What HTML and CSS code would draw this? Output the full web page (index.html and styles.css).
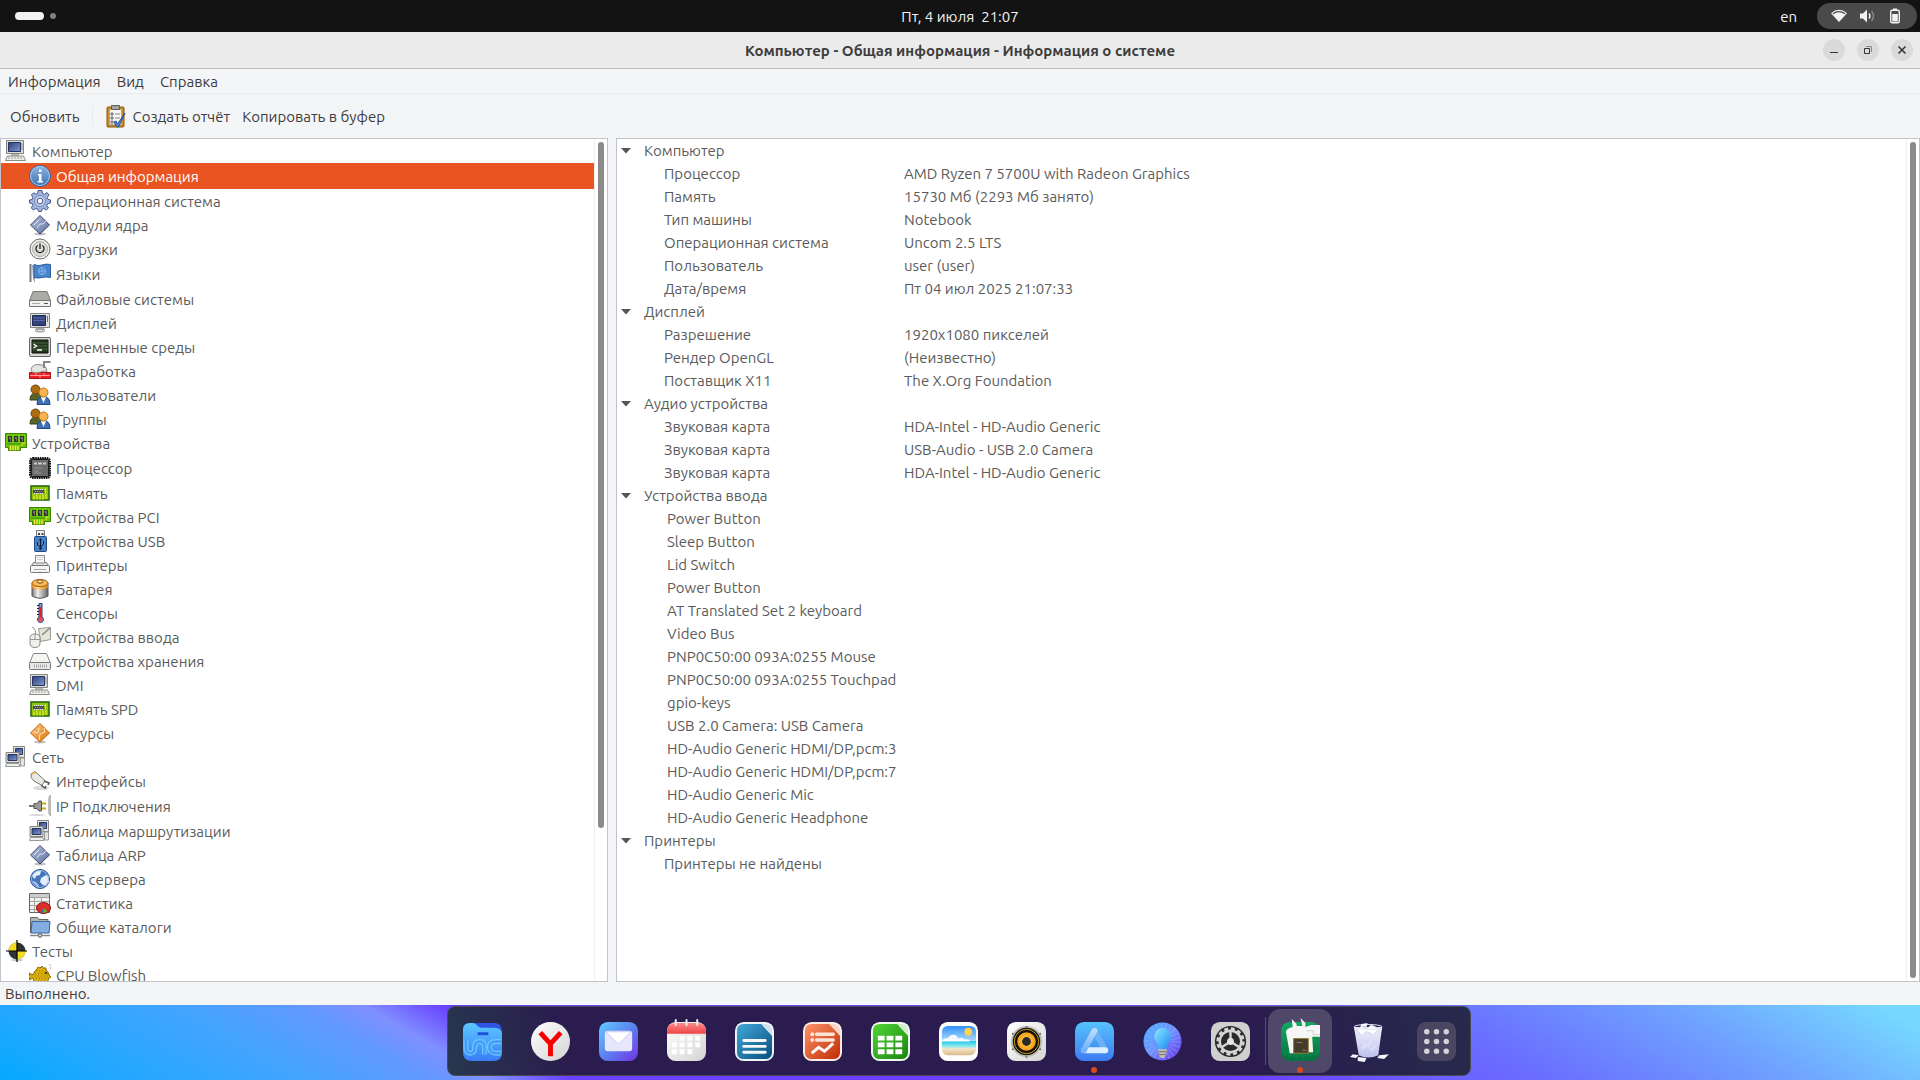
FILE: index.html
```html
<!DOCTYPE html>
<html lang="ru">
<head>
    <meta charset="UTF-8">
    <meta name="viewport" content="width=device-width, initial-scale=1.0">
    <title>Компьютер - Общая информация - Информация о системе</title>
    <link rel="stylesheet" href="styles.css">
</head>
<body>
    <svg class="sprite" aria-hidden="true">
        <defs>
            <linearGradient id="g-screen" x1="0" y1="0" x2="1" y2="1"><stop offset="0" stop-color="#2c3f80"/><stop offset="1" stop-color="#7f9bd0"/></linearGradient>
            <linearGradient id="g-info" x1="0" y1="0" x2="0" y2="1"><stop offset="0" stop-color="#8fb5e0"/><stop offset="1" stop-color="#3a72b8"/></linearGradient>
            <linearGradient id="g-gem" x1="0" y1="0" x2="1" y2="1"><stop offset="0" stop-color="#b9c4de"/><stop offset="1" stop-color="#5c6d9c"/></linearGradient>
            <linearGradient id="g-gold" x1="0" y1="0" x2="1" y2="1"><stop offset="0" stop-color="#fbc784"/><stop offset="1" stop-color="#dd7408"/></linearGradient>
            <linearGradient id="g-metal" x1="0" y1="0" x2="1" y2="0"><stop offset="0" stop-color="#777"/><stop offset=".35" stop-color="#eee"/><stop offset="1" stop-color="#666"/></linearGradient>
            <linearGradient id="g-amber" x1="0" y1="0" x2="1" y2="0"><stop offset="0" stop-color="#dd8a1a"/><stop offset=".35" stop-color="#ffd58c"/><stop offset="1" stop-color="#d07c10"/></linearGradient>
            <linearGradient id="g-folder" x1="0" y1="0" x2="0" y2="1"><stop offset="0" stop-color="#5cc8ff"/><stop offset="1" stop-color="#3a7cf6"/></linearGradient>
            <linearGradient id="g-white" x1="0" y1="0" x2="1" y2="1"><stop offset="0" stop-color="#fff"/><stop offset="1" stop-color="#d4d4d4"/></linearGradient>
            <linearGradient id="g-mail" x1="0" y1="0" x2="1" y2="1"><stop offset="0" stop-color="#63cdff"/><stop offset=".5" stop-color="#5b82f0"/><stop offset="1" stop-color="#7432e6"/></linearGradient>
            <linearGradient id="g-writer" x1="0" y1="0" x2="1" y2="1"><stop offset="0" stop-color="#40a8da"/><stop offset="1" stop-color="#0a4f7c"/></linearGradient>
            <linearGradient id="g-impress" x1="0" y1="0" x2="1" y2="1"><stop offset="0" stop-color="#ff9468"/><stop offset="1" stop-color="#bf2c04"/></linearGradient>
            <linearGradient id="g-calc" x1="0" y1="0" x2="1" y2="1"><stop offset="0" stop-color="#50d636"/><stop offset="1" stop-color="#1c8410"/></linearGradient>
            <linearGradient id="g-red" x1="0" y1="0" x2="0" y2="1"><stop offset="0" stop-color="#ff8a8a"/><stop offset="1" stop-color="#ee4444"/></linearGradient>
            <linearGradient id="g-sky" x1="0" y1="0" x2="0" y2="1"><stop offset="0" stop-color="#2f90fa"/><stop offset=".5" stop-color="#a8dcfc"/><stop offset=".52" stop-color="#1ec6e8"/><stop offset=".72" stop-color="#a0ecee"/><stop offset=".78" stop-color="#f4e4c8"/><stop offset="1" stop-color="#d9b98a"/></linearGradient>
            <linearGradient id="g-store" x1="0" y1="0" x2="0" y2="1"><stop offset="0" stop-color="#56c2fc"/><stop offset="1" stop-color="#3b7cf2"/></linearGradient>
            <linearGradient id="g-bar" x1="0" y1="0" x2="0" y2="1"><stop offset="0" stop-color="#b9dcff"/><stop offset="1" stop-color="#6fb0fa"/></linearGradient>
            <linearGradient id="g-hints" x1="0" y1="0" x2="1" y2="1"><stop offset="0" stop-color="#48b0ff"/><stop offset=".5" stop-color="#6f92ff"/><stop offset="1" stop-color="#6a2ae8"/></linearGradient>
            <linearGradient id="g-bulb" x1="0" y1="0" x2="1" y2="1"><stop offset="0" stop-color="#8fe8ff"/><stop offset="1" stop-color="#168cf0"/></linearGradient>
            <linearGradient id="g-green" x1="0" y1="0" x2="0" y2="1"><stop offset="0" stop-color="#14a862"/><stop offset="1" stop-color="#087040"/></linearGradient>
            <linearGradient id="g-bin" x1="0" y1="0" x2="0" y2="1"><stop offset="0" stop-color="#eef0fa"/><stop offset="1" stop-color="#bfc2f0"/></linearGradient>
            <radialGradient id="g-cone"><stop offset="0" stop-color="#ffe060"/><stop offset="1" stop-color="#f59a10"/></radialGradient>
        </defs>

        <!-- tree icons, 22x22 -->
        <symbol id="i-computer" viewBox="0 0 22 22">
            <path d="M1.500.5h17v13h-17z" fill="#deded9" stroke="#84857f"/>
            <path d="M3.500 2.500h12v9h-12z" fill="url(#g-screen)" stroke="#26345f"/>
            <path d="M17 3v7" stroke="#999"/>
            <path d="M6 14h8v2H6z" fill="#b8b8b2"/>
            <path d="M2.500 16h16l2 4.500H.5z" fill="#eeeeea" stroke="#8c8d88"/>
            <path d="M3 18h14" stroke="#9d9e99" stroke-dasharray="2 1"/>
        </symbol>
        <symbol id="i-info" viewBox="0 0 22 22">
            <circle cx="11" cy="11" r="10.500" fill="url(#g-info)" stroke="#3465a4"/>
            <circle cx="11" cy="11" r="9.500" fill="none" stroke="#a9c6e8"/>
            <path d="M10 4.500h2.500v2.500H10zM9 9h3.500v7H14v1.500H8.500V16H10v-5.500H9z" fill="#fff"/>
        </symbol>
        <symbol id="i-gear" viewBox="0 0 22 22">
            <path d="M9 .5h4l.5 3 2 .8L18 2.500l2 2.500-1.800 2.500.6 1.800 2.700.7v3l-2.800.6-.9 1.900 1.700 2.400-2.300 2.200-2.500-1.700-1.800.8-.4 2.300h-3l-.7-2.300-1.900-.8-2.500 1.600-2.200-2.200 1.700-2.500-.8-1.800L.5 13v-3l2.700-.6.7-2L2.400 5l2.200-2.200L7 4.200l1.700-.7z" fill="#a3b3da" stroke="#46598f"/>
            <circle cx="11" cy="11" r="5.500" fill="#c4d0ea" stroke="#7587b8"/>
            <circle cx="11" cy="11" r="2.800" fill="#fff" stroke="#46598f"/>
        </symbol>
        <symbol id="i-gem" viewBox="0 0 22 22">
            <ellipse cx="11" cy="20" rx="6" ry="1.500" fill="#000" opacity=".25"/>
            <path d="M11 1.500 20.500 11 11 20 1.500 11z" fill="url(#g-gem)" stroke="#34446f"/>
            <path d="M5 11l5-5M8 14l3-4h3l3-3" stroke="#dfe5f2" fill="none"/>
        </symbol>
        <symbol id="i-gem-orange" viewBox="0 0 22 22">
            <ellipse cx="11" cy="20" rx="6" ry="1.500" fill="#000" opacity=".25"/>
            <path d="M11 1.500 20.500 11 11 20 1.500 11z" fill="url(#g-gold)" stroke="#c4620c"/>
            <path d="M4 10l5 1 1-5M10 18l1-6 5-2-1-4" stroke="#ffe3bd" fill="none"/>
        </symbol>
        <symbol id="i-power" viewBox="0 0 22 22">
            <circle cx="11" cy="11" r="10" fill="#f2f2f0" stroke="#6d6e6a"/>
            <circle cx="11" cy="11" r="7.500" fill="#dcdcd8" stroke="#aaa"/>
            <path d="M8.500 7.500a4 4 0 1 0 5 0M11 5.500V11" fill="none" stroke="#222" stroke-width="1.300"/>
        </symbol>
        <symbol id="i-flag" viewBox="0 0 22 22">
            <path d="M1.500 1v18" stroke="#777a78" stroke-width="2"/>
            <path d="M3 2l3 1v17l-2-4z" fill="#9aa7b0"/>
            <path d="M5 1.500q4 2 8 .5t8.500-.5v13q-5-1-8.500 0t-8 0z" fill="#4786cf" stroke="#2c5e9e"/>
            <circle cx="13" cy="8" r="3.500" fill="none" stroke="#86b4ea"/>
            <path d="M10 8h6M13 5v6" stroke="#86b4ea"/>
        </symbol>
        <symbol id="i-drive" viewBox="0 0 22 22">
            <path d="M4 3.500h14l3.500 9H.5z" fill="#aaaaa6" stroke="#777"/>
            <path d="M.5 12.500h21v6H.5z" fill="#f0f0ee" stroke="#777"/>
            <path d="M3 15.500h8" stroke="#aaa"/><path d="M15 15.500h4" stroke="#555"/>
        </symbol>
        <symbol id="i-display" viewBox="0 0 22 22">
            <path d="M1.500 1.500h19v14h-19z" fill="#e0e0dc" stroke="#84857f"/>
            <path d="M3.500 3.500h13v10h-13z" fill="#34427c" stroke="#1e2a55"/>
            <path d="M4 6h12M4 8.500h12" stroke="#5668a5"/>
            <path d="M18.500 4v6" stroke="#777"/>
            <path d="M7 16h8l1 2H6z" fill="#aaa"/><ellipse cx="11" cy="18.500" rx="5" ry="1.500" fill="#d8d8d4" stroke="#999"/>
        </symbol>
        <symbol id="i-terminal" viewBox="0 0 22 22">
            <rect x=".5" y="1.500" width="21" height="19" rx="1.500" fill="#d8d8d4" stroke="#666"/>
            <path d="M3 4h16v13H3z" fill="#26371f" stroke="#111"/>
            <path d="M3 7h16M3 10h16M3 13h16" stroke="#46603a"/>
            <path d="M4.500 8l3 2-3 2M8 14h5" fill="none" stroke="#fff" stroke-width="1.300"/>
        </symbol>
        <symbol id="i-trowel" viewBox="0 0 22 22">
            <path d="M.5 12.500h21v6H.5z" fill="#ee2024" stroke="#a80f12"/>
            <path d="M1 15.500h20M7 13v2M15 13v2M11 16v2" stroke="#ff9c9c"/>
            <path d="M2 9.500q1-5 7-5 6 0 8 3l1 4q-3-1-5 0t-4 1q-7 1-7-3z" fill="#e4e4e0" stroke="#888"/>
            <path d="M15 8V2h6.500" fill="none" stroke="#888" stroke-width="2"/>
        </symbol>
        <symbol id="i-users" viewBox="0 0 22 22">
            <path d="M1 16q0-7 6-7t6 7z" fill="#56662a" stroke="#333e14"/>
            <circle cx="6.500" cy="5.500" r="4.500" fill="#b06a10" stroke="#744205"/>
            <path d="M8 20.500q0-8 6.500-8t6.500 8z" fill="#3f70b5" stroke="#204a87"/>
            <path d="M12 13l2.500 6 2.500-6z" fill="#fff"/>
            <circle cx="14.500" cy="8.500" r="4.500" fill="#f7b552" stroke="#c27410"/>
        </symbol>
        <symbol id="i-card" viewBox="0 0 22 22">
            <path d="M.5 1.500h21v14h-6v3h-12v-3h-3z" fill="#6cc60c" stroke="#3c8400"/>
            <path d="M3 4h4v6H3zM9 4h4v6H9zM15 4h4v6h-4z" fill="#333"/>
            <path d="M4 6h2M10 6h2M16 6h2M5 8h1M11 8h1M17 8h1" stroke="#bbb"/>
            <path d="M5.500 13.500v5M8 13.500v5M10.500 13.500v5M13 13.500v5" stroke="#f7e640" stroke-width="1.300"/>
            <path d="M2 12h14" stroke="#3a8800"/><path d="M17 14v-3h3" fill="none" stroke="#f0e020"/>
        </symbol>
        <symbol id="i-cpu" viewBox="0 0 22 22">
            <rect x="1" y="1" width="20" height="20" rx="3" fill="#777" stroke="#111" stroke-width="2" stroke-dasharray="1.500 .8"/>
            <rect x="2.500" y="2.500" width="17" height="17" rx="1" fill="#6b6b6b" stroke="#1c1c1c"/>
            <path d="M5 6.500h3M9 6.500h4M14 6.500h3" stroke="#ccc" stroke-width="2"/>
            <path d="M5 11h8M5 14h5M5 16h7" stroke="#999"/>
        </symbol>
        <symbol id="i-memory" viewBox="0 0 22 22">
            <path d="M2 4h18v14H2z" fill="#8fc40c" stroke="#21620c" stroke-width="1.500"/>
            <path d="M5 7.500h9M5 11.500h9" stroke="#eee" stroke-dasharray="1 1"/>
            <path d="M4 8h11v3H4z" fill="#4a4a4a"/><path d="M6 9.500h7" stroke="#999" stroke-dasharray="1 1"/>
            <path d="M16.500 6v5" stroke="#e8e020"/>
            <path d="M5 13.500V18M8 12.500V18M11 13.500V18M14 12.500V18M17 12v5" stroke="#fbf030"/>
        </symbol>
        <symbol id="i-usb" viewBox="0 0 22 22">
            <path d="M7.500.5h8v6h-8z" fill="#eee" stroke="#777"/><path d="M9 3h2v2H9zM12.500 3h2v2h-2z" fill="#444"/>
            <rect x="5.500" y="6.500" width="12" height="15" rx="1" fill="#4a80c4" stroke="#204a87"/>
            <path d="M11.500 9v10M8.500 12v3l3 2 3-3v-3" fill="none" stroke="#0c1c38"/>
            <path d="M10 10.500l1.500-2.500 1.500 2.500z" fill="#0c1c38"/><circle cx="11.500" cy="18.500" r="1.300" fill="#0c1c38"/>
        </symbol>
        <symbol id="i-printer" viewBox="0 0 22 22">
            <path d="M4.500 8.500h13l3 4.500h-19z" fill="#dededa" stroke="#777"/>
            <path d="M6.500 9V1.500h9V9z" fill="#fafafa" stroke="#888"/><path d="M8 3.500h6M8 5.500h6" stroke="#ccc"/>
            <rect x="1.500" y="11.500" width="19" height="7" rx="1" fill="#f4f4f2" stroke="#777"/><path d="M5 15.500h12" stroke="#aaa"/>
        </symbol>
        <symbol id="i-battery" viewBox="0 0 22 22">
            <path d="M3 5v13q8 4.500 16 0V5z" fill="url(#g-metal)" stroke="#555"/>
            <path d="M3 5v5q8 4 16 0V5z" fill="url(#g-amber)"/>
            <ellipse cx="11" cy="5" rx="8" ry="3.500" fill="#f8bc5c" stroke="#a3600b"/>
            <ellipse cx="11" cy="3.500" rx="3" ry="1.700" fill="#ffd894" stroke="#7a4a0c"/>
        </symbol>
        <symbol id="i-thermo" viewBox="0 0 22 22">
            <path d="M10 1.500h3V15a3 3 0 1 1-3 0z" fill="#7d9fd4" stroke="#223e78"/>
            <path d="M11.500 5v11" stroke="#e01c24" stroke-width="2"/><circle cx="11.500" cy="17.500" r="2.300" fill="#f0484c"/>
            <path d="M8 3.500h2M8 6.500h2M8 9.500h2M8 12.500h2" stroke="#222"/>
        </symbol>
        <symbol id="i-input" viewBox="0 0 22 22">
            <path d="M9.500 2.500l12-1v12l-10 2z" fill="#e4e4da" stroke="#999a90"/>
            <path d="M13 9l8-7" stroke="#888" stroke-width="1.500"/>
            <path d="M6 9Q8 4 3 1" fill="none" stroke="#888"/>
            <path d="M1 12q0-4 5-4t5 4v5q0 4.500-5 4.500T1 17z" fill="#efefed" stroke="#8b8c86"/>
            <path d="M1 13.500h10M6 8.500v5" stroke="#999"/>
        </symbol>
        <symbol id="i-hdd" viewBox="0 0 22 22">
            <path d="M4.500 3.500h13l4 9.500H.5z" fill="#f4f4f2" stroke="#888"/>
            <rect x=".5" y="12.500" width="21" height="7" rx="1" fill="#e8e8e4" stroke="#777"/><path d="M5 16h13" stroke="#aaa" stroke-width="3" stroke-dasharray="1 1"/>
        </symbol>
        <symbol id="i-network" viewBox="0 0 22 22">
            <path d="M8.500.5h11v11h-11z" fill="#e2e2de" stroke="#84857f"/>
            <path d="M10.500 2.500h7v6h-7z" fill="url(#g-screen)" stroke="#26345f"/>
            <path d="M15.500 12h4v8h-4z" fill="#e4e4e0" stroke="#999"/>
            <path d="M1 6.500h13v10H1z" fill="#e2e2de" stroke="#84857f"/>
            <path d="M3 8.500h9v6H3z" fill="url(#g-screen)" stroke="#26345f"/>
            <path d="M1.500 17.500h12.500l1 3H.5z" fill="#eeeeea" stroke="#999"/>
        </symbol>
        <symbol id="i-plug" viewBox="0 0 22 22">
            <ellipse cx="12" cy="18" rx="8" ry="2" fill="#000" opacity=".15"/>
            <path d="M2 4l4-2.500 10 9-3 5-8-4.500q-4-3-3-7z" fill="#e8e8e4" stroke="#7b7c76"/>
            <path d="M3 4l3-1.500" stroke="#f0b040" stroke-width="1.500"/>
            <path d="M15 11l5 2-1 2M12 15l4 3 1-2" fill="none" stroke="#555" stroke-width="1.500"/>
        </symbol>
        <symbol id="i-ip" viewBox="0 0 22 22">
            <ellipse cx="8" cy="20" rx="8" ry="1" fill="#000" opacity=".15"/>
            <path d="M0 11h6" stroke="#777" stroke-width="2"/>
            <path d="M5 8.500h3l2-2.500h2.500v10H10l-2-2.500H5z" fill="#999a94" stroke="#555"/>
            <path d="M13 8.500h4M13 13.500h4" stroke="#c8ac08" stroke-width="2"/>
            <path d="M22 .5q-2 0-2 3v14q0 3 2 3z" fill="#f0f0ee" stroke="#888"/>
        </symbol>
        <symbol id="i-globe" viewBox="0 0 22 22">
            <circle cx="11" cy="11" r="9.500" fill="#4374bc" stroke="#24509a"/>
            <path d="M3 8q3-6 9-5l-1 4-4 1-1 3zM12 10l5-3 3 2v5l-3 4-3-1-3-3z" fill="#e6eef9"/>
            <path d="M4 14q4 1 5 5" stroke="#a9c5ea" stroke-width="2" fill="none"/>
            <circle cx="11" cy="11" r="8.500" fill="none" stroke="#9dbce4"/>
        </symbol>
        <symbol id="i-stats" viewBox="0 0 22 22">
            <path d="M.5 1.500h20v19H.5z" fill="#f2f2f0" stroke="#666"/>
            <path d="M1 5.500h19M1 9.500h19M1 13.500h8M1 17.500h6M5.500 2v18M12.500 2v8" stroke="#a5a5a0"/>
            <path d="M1 3.500h19" stroke="#ccc" stroke-width="3"/>
            <ellipse cx="14.500" cy="16" rx="7" ry="5.500" fill="#dd2e2e" stroke="#8f0d0d"/>
            <path d="M14.500 15.500l-3 5.500h3z" fill="#3b6bc0"/><path d="M14.500 15.500V21l4-1z" fill="#5ab820"/>
        </symbol>
        <symbol id="i-share" viewBox="0 0 22 22">
            <path d="M1.500 17V1.500h7l1.500 2h9V8" fill="#b4b6b2" stroke="#666"/>
            <path d="M3 5.500h18l-1 11.500H2z" fill="#84ace0" stroke="#3465a4"/>
            <path d="M1 19.500h20" stroke="#888" stroke-width="1.500"/><circle cx="11" cy="19.500" r="1.800" fill="#ddd" stroke="#555"/>
        </symbol>
        <symbol id="i-test" viewBox="0 0 22 22">
            <ellipse cx="12" cy="20" rx="6" ry="1.500" fill="#000" opacity=".2"/>
            <circle cx="12" cy="11" r="8.500" fill="#2e3436"/>
            <path d="M12 11V2.500A8.500 8.500 0 0 0 3.500 11zM12 11v8.500a8.500 8.500 0 0 0 8.500-8.500z" fill="#f5dc20"/>
            <path d="M12 0v22M1 11h21" stroke="#000" stroke-width="1.200"/>
        </symbol>
        <symbol id="i-fish" viewBox="0 0 22 22">
            <path d="M0 9l4 2q1-4 4-6l1-2 2 1 2-2 1 2 3 0 0 2q3 2 3.500 6l1.500 1-2 1q-2 7-8 7-7 0-8-7l-4 2 1-3.500z" fill="#dcae0c" stroke="#8a6c08"/>
            <path d="M7 7h10M6 9.500h13M6 12h13M7 14.500h11M9 17h7" stroke="#96760a" stroke-dasharray="1 2"/>
            <circle cx="17" cy="9" r="1" fill="#222"/><path d="M20.500 1h1M21 4h1" stroke="#666"/>
        </symbol>
        <symbol id="i-report" viewBox="0 0 22 24">
            <rect x="2" y="3" width="17" height="20" rx="1" fill="#c98a2c" stroke="#8f5902"/>
            <path d="M4.500 5.500h12v15h-12z" fill="#f6f6f4" stroke="#aaa"/>
            <path d="M6.500 1.500h8v4h-8z" fill="#a5a6a2" stroke="#60615d"/>
            <path d="M6 9h2v2H6zM6 13h2v2H6zM6 17h2v2H6z" fill="none" stroke="#666"/>
            <path d="M10 10h5M10 14h5" stroke="#888"/>
            <path d="M9 18l2-1 1.500 3L20 9l-6.500 14h-1.500z" fill="#5a8ccc" stroke="#24509a"/>
        </symbol>
        <symbol id="i-arrow" viewBox="0 0 10 6"><path d="M0 0h10L5 5.500z" fill="#555"/></symbol>
    </svg>

    <header class="topbar">
        <button class="workspaces" aria-label="Рабочие столы"><span class="pill"></span><span class="dot"></span></button>
        <button class="clock">Пт, 4 июля&nbsp; 21:07</button>
        <div class="tray">
            <button class="lang">en</button>
            <button class="quick" aria-label="Системное меню">
                <svg width="16" height="16" viewBox="0 0 16 16"><path d="M0 5.200Q8-1.500 16 5.200L8 14z" fill="#f2f2f2"/><path d="M2 5.800Q8 1.500 14 5.800" fill="none" stroke="#4a4a4a" stroke-width="1.300"/></svg>
                <svg width="16" height="16" viewBox="0 0 16 16"><path d="M1 5.500h3L8 1.500v13l-4-4H1z" fill="#f2f2f2"/><path d="M10 5.500q2 2.500 0 5" fill="none" stroke="#f2f2f2" stroke-width="1.400"/><path d="M12.500 3q4 5 0 10" fill="none" stroke="#8a8a8a" stroke-width="1.400"/></svg>
                <svg width="16" height="16" viewBox="0 0 16 16"><path d="M6 .5h4v2H6z" fill="#f2f2f2"/><rect x="3.700" y="2.200" width="8.600" height="12.600" rx="1.500" fill="none" stroke="#f2f2f2" stroke-width="1.400"/><path d="M5.200 6h5.600v7.500H5.200z" fill="#f2f2f2"/></svg>
            </button>
        </div>
    </header>

    <main class="window">
        <div class="titlebar">
            <h1>Компьютер - Общая информация - Информация о системе</h1>
            <div class="controls">
                <button aria-label="Свернуть"><svg width="10" height="10"><path d="M1 7.500h8" stroke="#333"/></svg></button>
                <button aria-label="Восстановить"><svg width="10" height="10"><path d="M1.500 3.500h5v5h-5z" fill="none" stroke="#333"/><path d="M3 1.500h5.500V7" fill="none" stroke="#888"/></svg></button>
                <button aria-label="Закрыть"><svg width="10" height="10"><path d="M1.500 1.500l7 7M8.500 1.500l-7 7" stroke="#333" stroke-width="1.500"/></svg></button>
            </div>
        </div>
        <nav class="menubar">
            <button>Информация</button>
            <button>Вид</button>
            <button>Справка</button>
        </nav>
        <div class="toolbar">
            <button>Обновить</button>
            <span class="divider"></span>
            <button><svg width="22" height="24"><use href="#i-report"/></svg>Создать отчёт</button>
            <button>Копировать в буфер</button>
        </div>

        <div class="panes">
            <div class="pane tree-pane">
                <ul class="tree">
                    <li><button><svg><use href="#i-computer"/></svg>Компьютер</button>
                        <ul>
                            <li><button class="selected"><svg><use href="#i-info"/></svg>Общая информация</button></li>
                            <li><button><svg><use href="#i-gear"/></svg>Операционная система</button></li>
                            <li><button><svg><use href="#i-gem"/></svg>Модули ядра</button></li>
                            <li><button><svg><use href="#i-power"/></svg>Загрузки</button></li>
                            <li><button class="tall"><svg><use href="#i-flag"/></svg>Языки</button></li>
                            <li><button><svg><use href="#i-drive"/></svg>Файловые системы</button></li>
                            <li><button><svg><use href="#i-display"/></svg>Дисплей</button></li>
                            <li><button><svg><use href="#i-terminal"/></svg>Переменные среды</button></li>
                            <li><button><svg><use href="#i-trowel"/></svg>Разработка</button></li>
                            <li><button><svg><use href="#i-users"/></svg>Пользователи</button></li>
                            <li><button><svg><use href="#i-users"/></svg>Группы</button></li>
                        </ul>
                    </li>
                    <li><button><svg><use href="#i-card"/></svg>Устройства</button>
                        <ul>
                            <li><button class="tall"><svg><use href="#i-cpu"/></svg>Процессор</button></li>
                            <li><button><svg><use href="#i-memory"/></svg>Память</button></li>
                            <li><button><svg><use href="#i-card"/></svg>Устройства PCI</button></li>
                            <li><button><svg><use href="#i-usb"/></svg>Устройства USB</button></li>
                            <li><button><svg><use href="#i-printer"/></svg>Принтеры</button></li>
                            <li><button><svg><use href="#i-battery"/></svg>Батарея</button></li>
                            <li><button><svg><use href="#i-thermo"/></svg>Сенсоры</button></li>
                            <li><button><svg><use href="#i-input"/></svg>Устройства ввода</button></li>
                            <li><button><svg><use href="#i-hdd"/></svg>Устройства хранения</button></li>
                            <li><button><svg><use href="#i-computer"/></svg>DMI</button></li>
                            <li><button><svg><use href="#i-memory"/></svg>Память SPD</button></li>
                            <li><button><svg><use href="#i-gem-orange"/></svg>Ресурсы</button></li>
                        </ul>
                    </li>
                    <li><button><svg><use href="#i-network"/></svg>Сеть</button>
                        <ul>
                            <li><button><svg><use href="#i-plug"/></svg>Интерфейсы</button></li>
                            <li><button class="tall"><svg><use href="#i-ip"/></svg>IP Подключения</button></li>
                            <li><button><svg><use href="#i-network"/></svg>Таблица маршрутизации</button></li>
                            <li><button><svg><use href="#i-gem"/></svg>Таблица ARP</button></li>
                            <li><button><svg><use href="#i-globe"/></svg>DNS сервера</button></li>
                            <li><button><svg><use href="#i-stats"/></svg>Статистика</button></li>
                            <li><button><svg><use href="#i-share"/></svg>Общие каталоги</button></li>
                        </ul>
                    </li>
                    <li><button><svg><use href="#i-test"/></svg>Тесты</button>
                        <ul>
                            <li><button><svg><use href="#i-fish"/></svg>CPU Blowfish</button></li>
                        </ul>
                    </li>
                </ul>
                <div class="scrollbar"><span class="thumb thumb-tree"></span></div>
            </div>

            <div class="pane info-pane">
                <div class="info-scroll">
                    <table class="info">
                        <colgroup><col class="col-name"><col></colgroup>
                        <tbody>
                            <tr><th colspan="2"><button><svg><use href="#i-arrow"/></svg>Компьютер</button></th></tr>
                            <tr><td>Процессор</td><td>AMD Ryzen 7 5700U with Radeon Graphics</td></tr>
                            <tr><td>Память</td><td>15730 Мб (2293 Мб занято)</td></tr>
                            <tr><td>Тип машины</td><td>Notebook</td></tr>
                            <tr><td>Операционная система</td><td>Uncom 2.5 LTS</td></tr>
                            <tr><td>Пользователь</td><td>user (user)</td></tr>
                            <tr><td>Дата/время</td><td>Пт 04 июл 2025 21:07:33</td></tr>
                        </tbody>
                        <tbody>
                            <tr><th colspan="2"><button><svg><use href="#i-arrow"/></svg>Дисплей</button></th></tr>
                            <tr><td>Разрешение</td><td>1920x1080 пикселей</td></tr>
                            <tr><td>Рендер OpenGL</td><td>(Неизвестно)</td></tr>
                            <tr><td>Поставщик X11</td><td>The X.Org Foundation</td></tr>
                        </tbody>
                        <tbody>
                            <tr><th colspan="2"><button><svg><use href="#i-arrow"/></svg>Аудио устройства</button></th></tr>
                            <tr><td>Звуковая карта</td><td>HDA-Intel - HD-Audio Generic</td></tr>
                            <tr><td>Звуковая карта</td><td>USB-Audio - USB 2.0 Camera</td></tr>
                            <tr><td>Звуковая карта</td><td>HDA-Intel - HD-Audio Generic</td></tr>
                        </tbody>
                        <tbody class="inputs">
                            <tr><th colspan="2"><button><svg><use href="#i-arrow"/></svg>Устройства ввода</button></th></tr>
                            <tr><td>Power Button</td><td></td></tr>
                            <tr><td>Sleep Button</td><td></td></tr>
                            <tr><td>Lid Switch</td><td></td></tr>
                            <tr><td>Power Button</td><td></td></tr>
                            <tr><td>AT Translated Set 2 keyboard</td><td></td></tr>
                            <tr><td>Video Bus</td><td></td></tr>
                            <tr><td>PNP0C50:00 093A:0255 Mouse</td><td></td></tr>
                            <tr><td>PNP0C50:00 093A:0255 Touchpad</td><td></td></tr>
                            <tr><td>gpio-keys</td><td></td></tr>
                            <tr><td>USB 2.0 Camera: USB Camera</td><td></td></tr>
                            <tr><td>HD-Audio Generic HDMI/DP,pcm:3</td><td></td></tr>
                            <tr><td>HD-Audio Generic HDMI/DP,pcm:7</td><td></td></tr>
                            <tr><td>HD-Audio Generic Mic</td><td></td></tr>
                            <tr><td>HD-Audio Generic Headphone</td><td></td></tr>
                        </tbody>
                        <tbody>
                            <tr><th colspan="2"><button><svg><use href="#i-arrow"/></svg>Принтеры</button></th></tr>
                            <tr><td>Принтеры не найдены</td><td></td></tr>
                        </tbody>
                    </table>
                </div>
                <div class="scrollbar"><span class="thumb"></span></div>
            </div>
        </div>
        <div class="statusbar">Выполнено.</div>
    </main>

    <footer class="desktop">
        <nav class="dock">
            <button aria-label="Файлы"><svg viewBox="0 0 40 40"><path d="M8 1h24q8 0 8 8v14H0V9q0-8 8-8z" fill="#2f54e4"/><path d="M0 8q0-7 7-7h3q3 0 5 3 2 2 5 2h12q8 0 8 7v18q0 9-9 9H9q-9 0-9-9z" fill="url(#g-folder)"/><path d="M15 12h11" stroke="#1f52d8" stroke-width="3"/><path d="M3 18v9q0 5 4.500 5t4.500-5v-2q0-5 5-5t5 5v8M39 20h-5q-7 0-7 6t7 6h5" fill="none" stroke="#6cc6ff" stroke-width="5"/><path d="M3 17v10q0 5 4.500 5t4.500-5v-2q0-5 5-5t5 5v9M40 20h-6q-7 0-7 6t7 6h6" fill="none" stroke="#459cf8" stroke-width="2.500"/></svg></button>
            <button aria-label="Яндекс Браузер"><svg viewBox="0 0 40 40"><circle cx="20" cy="20" r="20" fill="url(#g-white)"/><path d="M9.500 11 20 22.500 30.500 11M20 21v14" fill="none" stroke="#f60000" stroke-width="5"/></svg></button>
            <button aria-label="Почта"><svg viewBox="0 0 40 40"><rect width="40" height="40" rx="9" fill="url(#g-mail)"/><rect x="6" y="9" width="28" height="21" rx="3" fill="#e7e6fd"/><path d="M7 10l11 11q2 2 4 0l11-11z" fill="#fff" stroke="#c9caf2"/></svg></button>
            <button aria-label="Календарь"><svg viewBox="0 0 40 40"><rect width="40" height="40" rx="9" fill="url(#g-white)"/><path d="M0 12V9q0-8 9-8h22q9 0 9 8v3z" fill="url(#g-red)"/><path d="M9-2v5M20-2v5M31-2v5" stroke="#eee" stroke-width="2" stroke-linecap="round"/><g fill="#fff"><path d="M13 14h5v5h-5zM21 14h5v5h-5zM29 14h5v5h-5zM5 21h5v5H5zM13 21h5v5h-5zM21 21h5v5h-5zM29 21h5v5h-5zM5 28h5v5H5zM13 28h5v5h-5zM21 28h5v5h-5z"/></g></svg></button>
            <button aria-label="Writer"><svg viewBox="0 0 40 40"><rect width="40" height="40" rx="9" fill="#f0f5f8"/><path d="M9 2h18l11 12v17q0 7-7 7H9q-7 0-7-7V9q0-7 7-7z" fill="url(#g-writer)"/><path d="M27 2l11 12V9q0-7-7-7z" fill="#cfe2ee"/><path d="M9 19h22M9 25h22M9 31h22" stroke="#f4f8fb" stroke-width="3" stroke-linecap="round"/></svg></button>
            <button aria-label="Impress"><svg viewBox="0 0 40 40"><rect width="40" height="40" rx="9" fill="#fbeee8"/><path d="M9 2h18l11 12v17q0 7-7 7H9q-7 0-7-7V9q0-7 7-7z" fill="url(#g-impress)"/><path d="M27 2l11 12V9q0-7-7-7z" fill="#f8d6c8"/><path d="M14 12.500h17M14 18.500h17" stroke="#fbe4da" stroke-width="3.500" stroke-linecap="round"/><circle cx="9.500" cy="12.500" r="2" fill="#fbe4da"/><circle cx="9.500" cy="18.500" r="2" fill="#fbe4da"/><path d="M9 32l7-6 6 4 9-8" fill="none" stroke="#fff" stroke-width="3"/></svg></button>
            <button aria-label="Calc"><svg viewBox="0 0 40 40"><rect width="40" height="40" rx="9" fill="#f0faee"/><path d="M9 2h18l11 12v17q0 7-7 7H9q-7 0-7-7V9q0-7 7-7z" fill="url(#g-calc)"/><path d="M27 2l11 12V9q0-7-7-7z" fill="#d2f0cc"/><path d="M7 14h7v5H7zM16 14h7v5h-7zM25 14h7v5h-7zM7 21h7v5H7zM16 21h7v5h-7zM25 21h7v5h-7zM7 28h7v5H7zM16 28h7v5h-7zM25 28h7v5h-7z" fill="#fff"/></svg></button>
            <button aria-label="Изображения"><svg viewBox="0 0 40 40"><rect width="40" height="40" rx="9" fill="#fff"/><rect x="3" y="4" width="35" height="30" rx="6" fill="url(#g-sky)"/><path d="M3 19q3-3 6-2 2-4 6-4 3 0 5 4 4-2 6 1 4-1 6 2H3z" fill="#f4faff"/><circle cx="30" cy="10" r="4" fill="#ffd24a"/></svg></button>
            <button aria-label="Музыка"><svg viewBox="0 0 40 40"><rect width="40" height="40" rx="9" fill="url(#g-white)"/><circle cx="20" cy="20" r="16" fill="#bdbdb8"/><circle cx="20" cy="20" r="14" fill="#111"/><circle cx="20" cy="20" r="12.500" fill="none" stroke="#d0a010"/><circle cx="20" cy="20" r="9.500" fill="url(#g-cone)"/><circle cx="20" cy="20" r="4.500" fill="#2a2a2a"/><g fill="#666"><circle cx="20" cy="5" r="1"/><circle cx="6" cy="12" r="1"/><circle cx="34" cy="12" r="1"/><circle cx="6" cy="28" r="1"/><circle cx="34" cy="28" r="1"/><circle cx="20" cy="36" r="1"/></g></svg></button>
            <button class="running" aria-label="Центр приложений"><svg viewBox="0 0 40 40"><rect width="40" height="40" rx="9" fill="url(#g-store)"/><path d="M20 9 31 29" stroke="#6cb0f8" stroke-width="6" stroke-linecap="round"/><path d="M9 29H31" stroke="#dceeff" stroke-width="6" stroke-linecap="round"/><path d="M20 9 9 29" stroke="url(#g-bar)" stroke-width="6" stroke-linecap="round"/></svg></button>
            <button aria-label="Советы"><svg viewBox="0 0 40 40"><circle cx="20" cy="20" r="19.500" fill="url(#g-hints)"/><circle cx="20" cy="20" r="14" fill="none" stroke="#a6c4ff" stroke-width="9" stroke-dasharray="1 3" opacity=".35"/><path d="M20 6a9 9 0 0 1 6 15q-2 2-2 7h-8q0-5-2-7A9 9 0 0 1 20 6z" fill="url(#g-bulb)"/><path d="M15.500 28h9l-1 6-2 3h-3l-2-3z" fill="#c8c0b8"/><path d="M16 30.500h8M16 33.500h8" stroke="#706860"/></svg></button>
            <button aria-label="Настройки"><svg viewBox="0 0 40 40"><rect width="40" height="40" rx="9" fill="#cfcfcd"/><circle cx="20" cy="20" r="16" fill="#2b2b2b"/><circle cx="20" cy="20" r="13" fill="none" stroke="#d4d4d2" stroke-width="3" stroke-dasharray="4 2.800"/><circle cx="20" cy="20" r="11" fill="none" stroke="#d4d4d2" stroke-width="2.500"/><path d="M20 20V9M20 20l-9 6M20 20l9 6" stroke="#d4d4d2" stroke-width="2.500"/><circle cx="20" cy="20" r="3.500" fill="#e6e6e4"/></svg></button>
            <span class="dock-divider"></span>
            <button class="running active" aria-label="Информация о системе"><svg viewBox="0 0 40 40"><rect width="40" height="40" rx="9" fill="url(#g-green)"/><path d="M1 32l2-3 2 5 2-5 2 7 3-5 3 6 4-6 3 6 4-7 3 6 3-7 3 5 3-6v5" fill="none" stroke="#0a8f50"/><path d="M5 10q1-4 7-5l-1-8 5 5v2h6l-2-8 5 5v4l6-2h9v12h-8l1 16h-5l-2-14H13v15H9z" fill="#f6f6f4"/><path d="M26 9h7v4h7" fill="none" stroke="#cfcfcc"/><rect x="13" y="17" width="15" height="15" fill="#453c2c" stroke="#96802a"/><path d="M16 21h6M22 29h4" stroke="#8a8274"/></svg></button>
            <button aria-label="Корзина"><svg viewBox="0 0 40 40"><path d="M5 5h29l-4 29q-10 5-20 0z" fill="url(#g-bin)"/><path d="M8 8l5-4 5 3 5-4 8 4-6 6-7-3-5 4z" fill="#fff" stroke="#d0d2ee"/><path d="M12 18l6 7M25 16l-6 10M13 27l8-4M27 25l-5 4" stroke="#dcdef6" stroke-width="3"/><ellipse cx="19.500" cy="5" rx="14.500" ry="2.500" fill="none" stroke="#dfe1f6"/><path d="M12 4l1-2 6-1-1 4z" fill="#fff"/><path d="M4 33l6 1-3 3-6-1zM9 36l9 1-2 4-7-1zM31 34l10-1-5 5-7-1z" fill="#f4f5ff"/></svg></button>
            <button aria-label="Показать приложения"><svg viewBox="0 0 40 40"><rect width="40" height="40" rx="9" fill="#4a4662"/><g fill="#d4d3dc"><circle cx="10" cy="10" r="2.800"/><circle cx="20" cy="10" r="2.800"/><circle cx="30" cy="10" r="2.800"/><circle cx="10" cy="20" r="2.800"/><circle cx="20" cy="20" r="2.800"/><circle cx="30" cy="20" r="2.800"/><circle cx="10" cy="30" r="2.800"/><circle cx="20" cy="30" r="2.800"/><circle cx="30" cy="30" r="2.800"/></g></svg></button>
        </nav>
    </footer>
</body>
</html>
```
FILE: styles.css
```css
*{
    margin: 0;
    padding: 0;
    box-sizing: border-box;
}

body{
    display: flex;
    flex-direction: column;
    height: 100vh;
    overflow: hidden;
    font-family: Ubuntu, "Noto Sans", sans-serif;
    font-size: 15px;
    color: #3d3d3d;
    background: #131313;
}

button{
    border: none;
    background: none;
    font: inherit;
    color: inherit;
    cursor: pointer;
    white-space: nowrap;
}

svg{
    display: block;
    flex-shrink: 0;
}

ul{
    list-style: none;
}

.sprite{
    position: absolute;
    width: 0;
    height: 0;
}

/* top panel */
.topbar{
    display: grid;
    grid-template-columns: 1fr auto 1fr;
    align-items: center;
    height: 32px;
    padding: 0 3px 0 15px;
    color: #f2f2f2;
    background: #131313;
}

.workspaces{
    display: flex;
    align-items: center;
    gap: 6px;
    justify-self: start;
}

.workspaces .pill{
    width: 29px;
    height: 8px;
    border-radius: 4px;
    background: #f2f2f2;
}

.workspaces .dot{
    width: 6px;
    height: 6px;
    border-radius: 50%;
    background: #808080;
}

.clock{
    padding-right: 12px;
}

.tray{
    display: flex;
    align-items: center;
    gap: 20px;
    justify-self: end;
}

.quick{
    display: flex;
    align-items: center;
    justify-content: center;
    gap: 12px;
    width: 100px;
    height: 26px;
    border-radius: 13px;
    background: #4a4a4a;
}

/* application window */
.window{
    display: flex;
    flex-direction: column;
    flex: 1;
    min-height: 0;
    background: #f4f5f7;
}

.titlebar{
    display: grid;
    grid-template-columns: 1fr auto 1fr;
    align-items: center;
    height: 37px;
    padding: 0 7px;
    background: #ebebeb;
    border-bottom: 1px solid #bdbdbd;
}

.titlebar h1{
    grid-column: 2;
    font-size: 15px;
    font-weight: bold;
}

.controls{
    display: flex;
    gap: 12px;
    justify-self: end;
}

.controls button{
    display: flex;
    align-items: center;
    justify-content: center;
    width: 22px;
    height: 22px;
    border-radius: 50%;
    background: #dadada;
}

.menubar{
    display: flex;
    align-items: center;
    gap: 16px;
    height: 25px;
    padding: 1px 8px 0;
    border-bottom: 1px solid #ebecee;
}

.toolbar{
    display: flex;
    align-items: center;
    gap: 12px;
    height: 44px;
    padding: 0 10px;
}

.toolbar button{
    display: flex;
    align-items: center;
    gap: 6px;
}

.toolbar .divider{
    width: 1px;
    height: 20px;
    background: #e8e9eb;
}

.panes{
    display: flex;
    gap: 8px;
    flex: 1;
    min-height: 0;
    color: #5b5b5b;
}

.pane{
    display: flex;
    min-width: 0;
    background: #fff;
    border: 1px solid #c0c3ca;
}

.tree-pane{
    flex: 0 0 608px;
}

.info-pane{
    flex: 1;
}

.tree,
.info-scroll{
    flex: 1;
    overflow: hidden;
}

.tree button{
    display: flex;
    align-items: center;
    gap: 5px;
    width: 100%;
    height: 24px;
    padding-left: 4px;
}

.tree ul button{
    padding-left: 28px;
}

.tree svg{
    width: 22px;
    height: 22px;
}

.tree .tall{
    height: 26px;
}

.tree .selected{
    height: 26px;
    color: #fff;
    background: #e95420;
}

.scrollbar{
    flex: 0 0 13px;
    padding: 3px;
    border-left: 1px solid #f0f0f0;
}

.thumb{
    display: block;
    width: 6px;
    height: 100%;
    border-radius: 3px;
    background: #8b8b8b;
}

.thumb-tree{
    height: 82%;
}

.info{
    width: 100%;
    border-collapse: collapse;
    table-layout: fixed;
}

.info .col-name{
    width: 287px;
}

.info tr{
    height: 23px;
}

.info th{
    font-weight: normal;
    text-align: left;
}

.info th button{
    display: flex;
    align-items: center;
    gap: 13px;
    height: 23px;
    padding-left: 4px;
}

.info th svg{
    width: 10px;
    height: 6px;
}

.info td{
    line-height: 23px;
    white-space: nowrap;
}

.info td:first-child{
    padding-left: 47px;
}

.info .inputs td:first-child{
    padding-left: 50px;
}

.statusbar{
    height: 23px;
    padding-left: 5px;
    line-height: 23px;
}

/* wallpaper strip and dock */
.desktop{
    display: flex;
    justify-content: center;
    align-items: flex-start;
    height: 75px;
    padding: 1px 2px 0 0;
    background: linear-gradient(30deg, #06a8ff, #22a8ff 6%, #44a4ff 15%, #6298ff 21%, #7f90ff 24%, #6a40ff 28%, #6c3cff 60%, #6a70ff 76%, #6fa4ff 88%, #76d8ff 98%);
}

.dock{
    display: flex;
    align-items: center;
    height: 70px;
    border: 1px solid #4a4a50;
    border-radius: 8px;
    background: linear-gradient(75deg, #27384f, #2a1c4e 12%, #2a1c4e 78%, #262a4c);
}

.dock button{
    position: relative;
    display: flex;
    align-items: center;
    justify-content: center;
    width: 64px;
    height: 64px;
    margin: 0 2px;
    border-radius: 12px;
}

.dock svg{
    width: 39px;
    height: 39px;
    overflow: visible;
}

.dock .active{
    background: #4f4868;
}

.dock .running::after{
    content: "";
    position: absolute;
    bottom: 0;
    left: 50%;
    width: 6px;
    height: 6px;
    margin-left: -3px;
    border-radius: 50%;
    background: #db4a18;
}

.dock-divider{
    width: 1px;
    height: 48px;
    margin-left: 1px;
    background: #57506f;
}
```
